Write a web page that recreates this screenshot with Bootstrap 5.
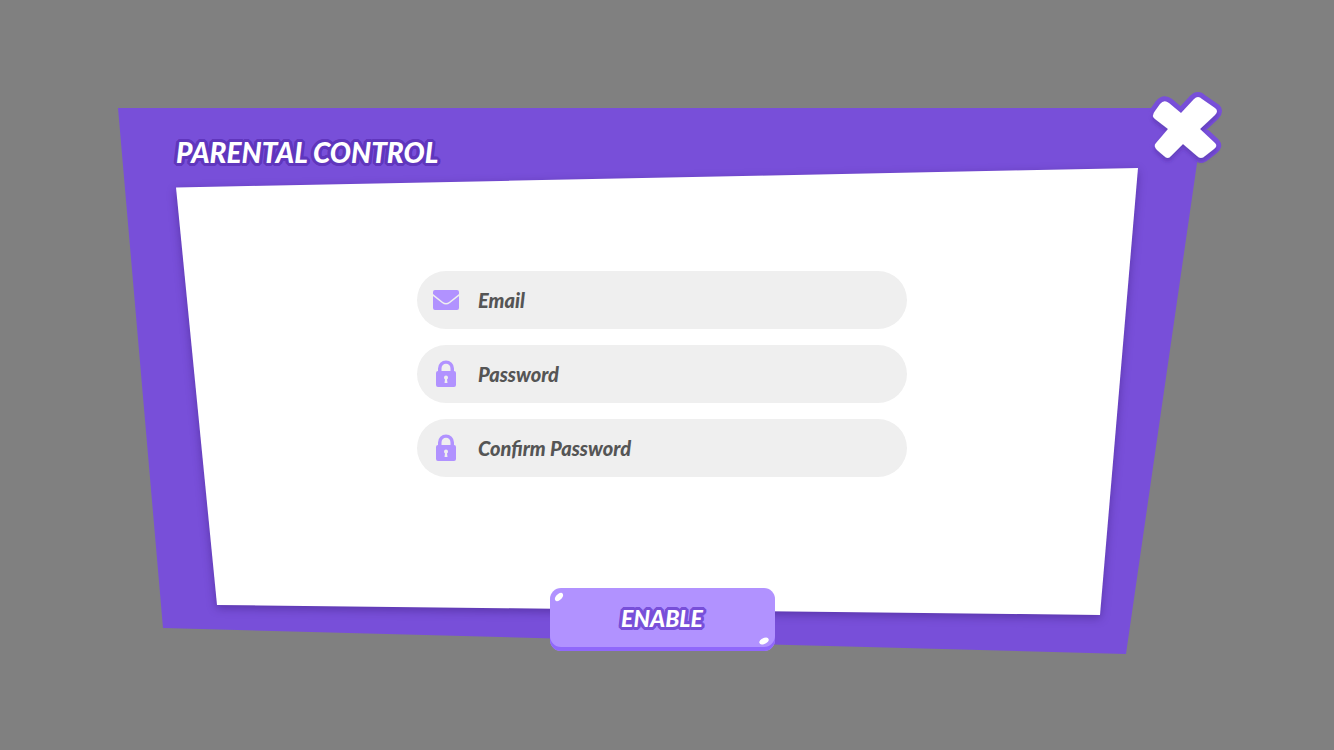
<!DOCTYPE html>
<html lang="en">
<head>
<meta charset="utf-8">
<meta name="viewport" content="width=device-width, initial-scale=1">
<title>Parental Control</title>
<link href="https://cdn.jsdelivr.net/npm/bootstrap@5.3.0/dist/css/bootstrap.min.css" rel="stylesheet">
<style>
  :root { --violet: #784fd9; --violet-dark: #6036bd; --lilac: #b192ff; --lilac-dark: #9068fb; }
  body { background: #808080; font-family: "Lato", "Open Sans", sans-serif; font-weight: 900; }
  .stage { padding: 108px 128px 48px 118px; }
  .frame { width: 100%; height: 100%; overflow: visible; z-index: 0; }
  .frame .sheet { filter: drop-shadow(0 3px 5px rgba(50, 20, 110, .45)); }
  .dialog-body { z-index: 1; padding: 27px 58px 3px; }
  .outlined {
    --edge: var(--violet);
    color: #fff; font-style: italic; font-weight: 900;
    text-shadow: 3px 0 var(--edge), -3px 0 var(--edge), 0 3px var(--edge), 0 -3px var(--edge),
      2px 2px var(--edge), -2px 2px var(--edge), 2px -2px var(--edge), -2px -2px var(--edge),
      3px 1px var(--edge), -3px 1px var(--edge), 3px -1px var(--edge), -3px -1px var(--edge),
      1px 3px var(--edge), -1px 3px var(--edge), 1px -3px var(--edge), -1px -3px var(--edge);
  }
  .heading { --edge: var(--violet-dark); font-size: 28px; line-height: 34px; }
  .fields { width: 490px; max-width: 100%; margin-top: 102px; }
  .field { height: 58px; background: #efefef; padding: 0 16px; gap: 18px; cursor: text; }
  .field svg { width: 27px; height: 28px; fill: var(--lilac); }
  .field input { font-size: 20px; font-weight: 900; font-style: italic; color: #555; box-shadow: none; }
  .field input:focus { color: #555; box-shadow: none; }
  .field input::placeholder { color: #555; opacity: 1; }
  .enable { width: 225px; height: 63px; margin-top: 111px; padding: 0 0 4px; border-radius: 11px;
    background: var(--lilac); box-shadow: inset 0 -4px var(--lilac-dark); font-size: 23px; line-height: 28px; }
  .glint { width: 10px; height: 6px; background: #fff; border-radius: 60% 40%; }
  .glint-top { top: 6px; left: 4px; transform: rotate(-35deg); }
  .glint-bottom { right: 6px; bottom: 7px; transform: rotate(-15deg); }
  .closer { top: -20px; right: -19px; width: 80px; height: 80px; z-index: 2; }
</style>
</head>
<body>
<main class="stage">
  <section class="position-relative" role="dialog" aria-labelledby="dialog-title">
    <svg class="frame position-absolute top-0 start-0" viewBox="0 0 1088 546" preserveAspectRatio="none" aria-hidden="true">
      <path fill="#784fd9" d="M0 0H1087L1008 546L45 520Z"/>
      <path class="sheet" fill="#fff" d="M58 79.500L1020 60L982 507L99 497Z"/>
    </svg>
    <button type="button" class="closer btn p-0 border-0 position-absolute" aria-label="Close">
      <svg class="d-block" width="80" height="80" viewBox="0 0 80 80" aria-hidden="true">
        <defs><filter id="soft" x="-20%" y="-20%" width="140%" height="150%"><feDropShadow dx="0" dy="3" stdDeviation="2" flood-color="#35127d" flood-opacity=".35"/></filter></defs>
        <path d="M15 16Q19 11 24 15L36 25L49 11Q53 7 57 11L70 20Q74 23 70 27L55 41L70 55Q73 58 69 61L60 68Q56 72 52 68L38 56L26 68Q23 72 19 68L12 62Q8 58 11 55L23 41L10 31Q6 28 10 23Z" fill="#784fd9" stroke="#784fd9" stroke-width="10" stroke-linejoin="round"/>
        <path d="M15 16Q19 11 24 15L36 25L49 11Q53 7 57 11L70 20Q74 23 70 27L55 41L70 55Q73 58 69 61L60 68Q56 72 52 68L38 56L26 68Q23 72 19 68L12 62Q8 58 11 55L23 41L10 31Q6 28 10 23Z" fill="#fff" filter="url(#soft)"/>
      </svg>
    </button>
    <div class="dialog-body position-relative">
      <h1 class="heading outlined m-0" id="dialog-title">PARENTAL CONTROL</h1>
      <form class="d-flex flex-column align-items-center">
        <div class="fields d-flex flex-column gap-3">
          <label class="field d-flex align-items-center rounded-pill" for="email">
            <svg class="flex-shrink-0" viewBox="0 0 27 28" aria-hidden="true"><path d="M0 6Q0 4 2 4H24Q26 4 26 6V8L16 16Q13 18 10 16L0 8ZM0 10L9 17Q13 20 17 17L26 10V22Q26 24 24 24H2Q0 24 0 22Z"/></svg>
            <input class="form-control border-0 bg-transparent p-0" id="email" type="email" placeholder="Email" aria-label="Email">
          </label>
          <label class="field d-flex align-items-center rounded-pill" for="password">
            <svg class="flex-shrink-0" viewBox="0 0 27 28" aria-hidden="true"><path fill-rule="evenodd" d="M5 11V8.500A8 8 0 0 1 21 8.500V11Q23 11 23 13V25Q23 27 21 27H5Q3 27 3 25V13Q3 11 5 11ZM8.500 11H17.500V8.500A4.500 4.800 0 0 0 8.500 8.500ZM11 17.500Q11 18.800 12 19.500L11.500 23H14.500L14 19.500Q15 18.800 15 17.500A2 2 0 0 0 11 17.500Z"/></svg>
            <input class="form-control border-0 bg-transparent p-0" id="password" type="password" placeholder="Password" aria-label="Password">
          </label>
          <label class="field d-flex align-items-center rounded-pill" for="confirm">
            <svg class="flex-shrink-0" viewBox="0 0 27 28" aria-hidden="true"><path fill-rule="evenodd" d="M5 11V8.500A8 8 0 0 1 21 8.500V11Q23 11 23 13V25Q23 27 21 27H5Q3 27 3 25V13Q3 11 5 11ZM8.500 11H17.500V8.500A4.500 4.800 0 0 0 8.500 8.500ZM11 17.500Q11 18.800 12 19.500L11.500 23H14.500L14 19.500Q15 18.800 15 17.500A2 2 0 0 0 11 17.500Z"/></svg>
            <input class="form-control border-0 bg-transparent p-0" id="confirm" type="password" placeholder="Confirm Password" aria-label="Confirm Password">
          </label>
        </div>
        <button type="submit" class="enable outlined position-relative border-0">
          <span class="glint glint-top position-absolute"></span>
          ENABLE
          <span class="glint glint-bottom position-absolute"></span>
        </button>
      </form>
    </div>
  </section>
</main>
<script src="https://cdn.jsdelivr.net/npm/bootstrap@5.3.0/dist/js/bootstrap.bundle.min.js"></script>
</body>
</html>
